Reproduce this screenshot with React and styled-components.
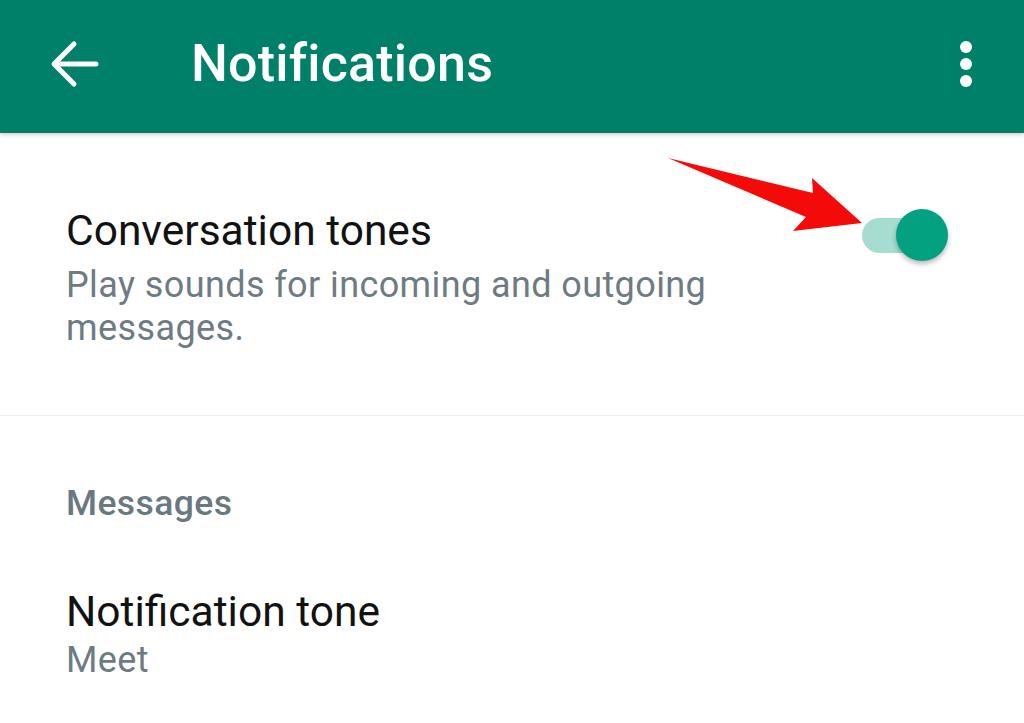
import React from 'react';
import styled, { createGlobalStyle } from 'styled-components';

const GlobalStyle = createGlobalStyle`
  html, body {
    margin: 0;
    padding: 0;
    background: #ffffff;
    font-family: Roboto, "Noto Sans", Arial, sans-serif;
  }
  #root {
    min-height: 723px;
  }
`;

const Page = styled.div`
  width: 1024px;
  height: 723px;
  overflow: hidden;
  background: #ffffff;
  position: relative;
`;

const AppBar = styled.header`
  height: 133px;
  background: #008069;
  display: flex;
  align-items: center;
  padding: 0 43px 0 50px;
  box-shadow: 0 2px 4px rgba(0, 0, 0, 0.18);
  position: relative;
  z-index: 1;
`;

const IconButton = styled.button`
  border: 0;
  background: transparent;
  padding: 0;
  display: flex;
  align-items: center;
  justify-content: center;
  width: ${p => p.size || 50}px;
  height: ${p => p.size || 50}px;
  color: #ffffff;
  margin-top: -6px;
`;

const Title = styled.h1`
  flex: 1;
  margin: -6px 0 0 91px;
  font-size: 52px;
  font-weight: 500;
  color: #ffffff;
  letter-spacing: 0.2px;
`;

const Content = styled.main`
  display: flex;
  flex-direction: column;
`;

const SettingRow = styled.div`
  display: flex;
  align-items: flex-start;
  padding: ${p => p.pad || '73px 76px 65px 66px'};
  border-bottom: ${p => (p.divider ? '1px solid #ececec' : 'none')};
`;

const TextBlock = styled.div`
  flex: 1;
  max-width: 740px;
  display: flex;
  flex-direction: column;
  gap: ${p => p.gap ?? 8}px;
`;

const RowTitle = styled.div`
  font-size: 42.5px;
  line-height: 50px;
  color: #121212;
`;

const RowSubtitle = styled.div`
  font-size: 36px;
  line-height: 43px;
  letter-spacing: 0.4px;
  color: #6e7b82;
`;

const SectionLabel = styled.div`
  padding: 66px 66px 0;
  font-size: 35.5px;
  line-height: 42px;
  letter-spacing: 0.4px;
  font-weight: 500;
  color: #6a7880;
`;

const Switch = styled.div`
  margin-left: auto;
  margin-top: 3px;
  width: 86px;
  height: 52px;
  position: relative;
  display: flex;
  align-items: center;
`;

const Track = styled.div`
  width: 68px;
  height: 35px;
  border-radius: 18px;
  background: #a6ddd0;
`;

const Thumb = styled.div`
  position: absolute;
  right: 0;
  top: 0;
  width: 52px;
  height: 52px;
  border-radius: 50%;
  background: #03a17f;
  box-shadow: 0 3px 5px rgba(0, 0, 0, 0.28);
`;

const Pointer = styled.svg`
  position: absolute;
  left: 660px;
  top: 150px;
  z-index: 2;
`;

const BackArrow = () => (
  <svg width="50" height="50" viewBox="0 0 50 50" fill="none">
    <path
      d="M46 25H5M24 5L4 25l20 20"
      stroke="#fff"
      strokeWidth="5"
      strokeLinecap="round"
      strokeLinejoin="round"
    />
  </svg>
);

const MoreDots = () => (
  <svg width="16" height="50" viewBox="0 0 16 50">
    <circle cx="8" cy="8" r="6" fill="#fff" />
    <circle cx="8" cy="25" r="6" fill="#fff" />
    <circle cx="8" cy="42" r="6" fill="#fff" />
  </svg>
);

export default function App() {
  return (
    <Page>
      <GlobalStyle />
      <AppBar>
        <IconButton aria-label="Back">
          <BackArrow />
        </IconButton>
        <Title>Notifications</Title>
        <IconButton size={30} aria-label="More options">
          <MoreDots />
        </IconButton>
      </AppBar>

      <Content>
        <SettingRow divider>
          <TextBlock>
            <RowTitle>Conversation tones</RowTitle>
            <RowSubtitle>Play sounds for incoming and outgoing messages.</RowSubtitle>
          </TextBlock>
          <Switch role="switch" aria-checked="true">
            <Track />
            <Thumb />
          </Switch>
        </SettingRow>

        <SectionLabel>Messages</SectionLabel>

        <SettingRow pad="63px 76px 0 66px">
          <TextBlock gap={2}>
            <RowTitle>Notification tone</RowTitle>
            <RowSubtitle>Meet</RowSubtitle>
          </TextBlock>
        </SettingRow>
      </Content>

      <Pointer width="210" height="90" viewBox="660 150 210 90">
        <path
          d="M668 158 L813 193 L812 178 L862 223 L793 231 L806 217 Z"
          fill="#f50a0a"
        />
      </Pointer>
    </Page>
  );
}
